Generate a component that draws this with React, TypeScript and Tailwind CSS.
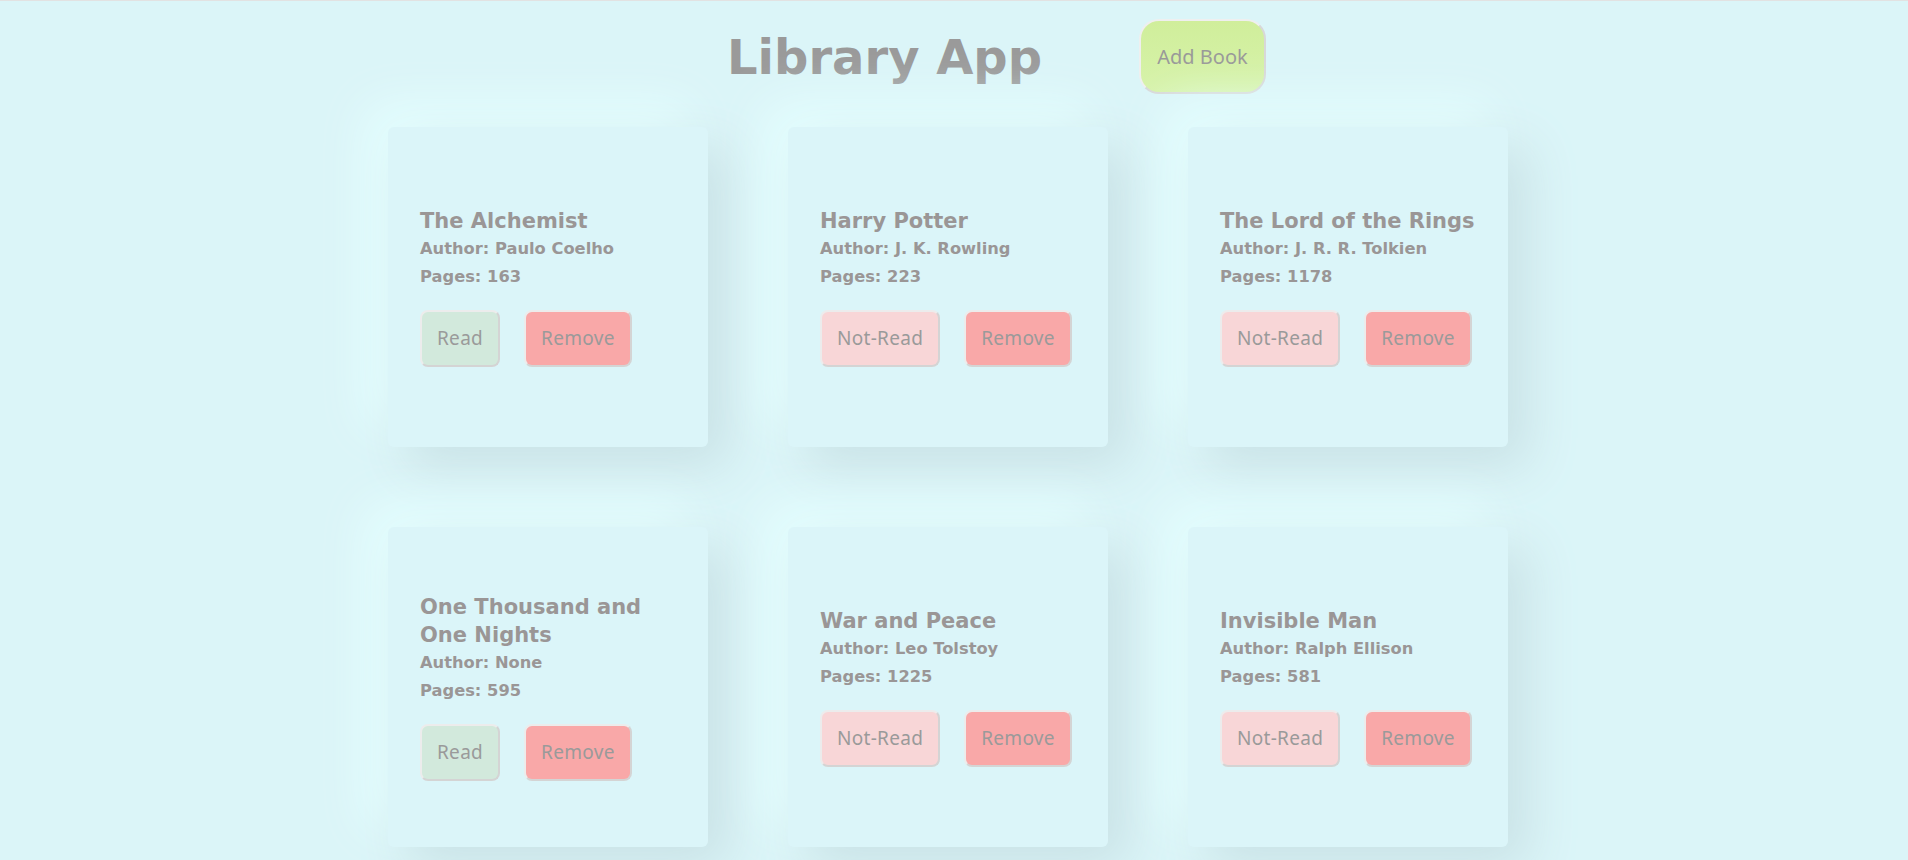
import React from "react";

type Book = { title: string; author: string; pages: number; read: boolean };

const books: Book[] = [
  { title: "The Alchemist", author: "Paulo Coelho", pages: 163, read: true },
  { title: "Harry Potter", author: "J. K. Rowling", pages: 223, read: false },
  { title: "The Lord of the Rings", author: "J. R. R. Tolkien", pages: 1178, read: false },
  { title: "One Thousand and One Nights", author: "None", pages: 595, read: true },
  { title: "War and Peace", author: "Leo Tolstoy", pages: 1225, read: false },
  { title: "Invisible Man", author: "Ralph Ellison", pages: 581, read: false },
];

const btnBase =
  "h-[57px] flex items-center justify-center border-2 border-t-[#ececec] border-l-[#ececec] border-r-[#d4d4d4] border-b-[#d4d4d4] rounded-[8px] px-[15px] text-[19px] tracking-[0.3px] text-[#9a9a9a] font-['Noto_Sans',sans-serif]";

function Card({ b }: { b: Book }) {
  return (
    <div className="w-[320px] h-[320px] rounded-[6px] bg-[#dbf5f9] shadow-[20px_20px_50px_#c9e2e6,-20px_-20px_50px_#e6ffff] flex flex-col justify-center pl-[32px] pr-[24px] font-['DejaVu_Sans',sans-serif] font-bold text-[#9a9696]">
      <div className="text-[21px] leading-[28px]">{b.title}</div>
      <div className="text-[16.3px] leading-[28px]">Author: {b.author}</div>
      <div className="text-[16.3px] leading-[28px]">Pages: {b.pages}</div>
      <div className="flex gap-[24px] mt-[19px] font-normal">
        <button className={`${btnBase} ${b.read ? "bg-[#d2e9dc]" : "bg-[#f8d6d7]"}`}>
          {b.read ? "Read" : "Not-Read"}
        </button>
        <button className={`${btnBase} bg-[#f9a8a8]`}>Remove</button>
      </div>
    </div>
  );
}

export default function App() {
  return (
    <div className="min-h-[860px] w-full bg-[#dbf5f8] border-t border-[#e2e2e2] overflow-hidden">
      <div className="flex items-center pt-[18px]">
        <h1 className="ml-[727px] w-[412px] font-['DejaVu_Sans',sans-serif] font-bold text-[48px] leading-[56px] text-[#9a9a9a]">
          Library App
        </h1>
        <button className="w-[127px] h-[75px] flex items-center justify-center rounded-[20px] border-2 border-t-[#efefef] border-l-[#efefef] border-r-[#d8d8d8] border-b-[#d8d8d8] bg-gradient-to-b from-[#d0ee9b] to-[#d7f3aa] text-[20px] text-[#999999] font-['Noto_Sans',sans-serif]">
          Add Book
        </button>
      </div>
      <div className="grid grid-cols-[320px_320px_320px] gap-[80px] ml-[388px] mt-[33px] pb-[40px]">
        {books.map((b) => (
          <Card key={b.title} b={b} />
        ))}
      </div>
    </div>
  );
}
